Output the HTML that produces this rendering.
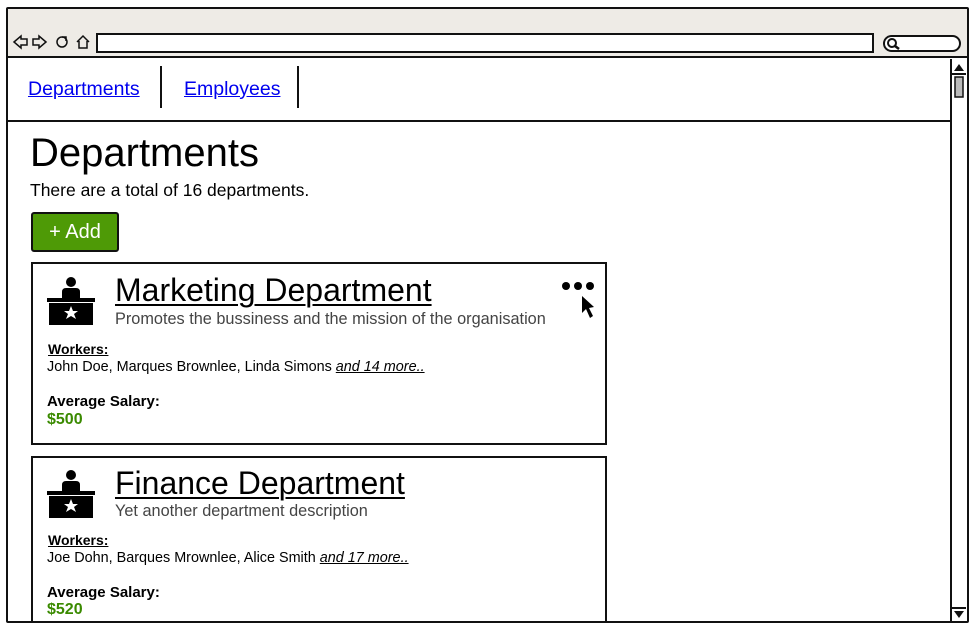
<!DOCTYPE html>
<html><head><meta charset="utf-8"><style>
*{margin:0;padding:0;box-sizing:border-box}
html,body{width:975px;height:629px;overflow:hidden}
body{background:#fff;position:relative;font-family:"Liberation Sans",sans-serif;color:#000}
.a{position:absolute;white-space:nowrap}
.frame{left:6px;top:7px;width:963px;height:616px;border:2px solid #111;border-radius:2px;z-index:5}
.tb{left:8px;top:9px;width:959px;height:49px;background:#eeebe6;border-bottom:2px solid #111}
.addr{left:96px;top:33px;width:778px;height:20px;background:#fff;border:2px solid #111}
.search{left:883px;top:35px;width:78px;height:17px;background:#fff;border:2px solid #111;border-radius:9px}
.sb{left:950px;top:59px;width:16px;height:563px;border-left:2px solid #111;background:#fff}
.nav{left:8px;top:120px;width:943px;height:2px;background:#111}
.lnk{color:#00e;text-decoration:underline;font-size:19.5px}
.sep{width:2px;height:42px;background:#111;top:66px}
.card{left:31px;width:576px;border:2px solid #111;background:#fff}
.t{font-size:32px;text-decoration:underline;text-decoration-thickness:2px;text-underline-offset:3px}
.d{font-size:16.3px;color:#444}
.w{font-size:14px;font-weight:bold;text-decoration:underline}
.n{font-size:14.4px}
.n i{text-decoration:underline}
.s{font-size:16px;font-weight:bold;color:#3a8a00}
</style></head><body>
<div class="a tb"></div>
<svg class="a" style="left:12px;top:33px" width="80" height="18" viewBox="0 0 80 18" fill="none" stroke="#111" stroke-width="1.5">
<path d="M2 9 L9 3 V6 H15 V12 H9 V15 Z"/>
<path d="M46 9 L39 3 V6 H33 V12 H39 V15 Z" transform="translate(-12 0)"/>
<circle cx="50" cy="9" r="5"/><path d="M50 4 L54 4 L54 8"/>
<path d="M71 9 L77 3 L83 9 M73 8 V15 H81 V8" transform="translate(-6 0)"/>
</svg>
<div class="a addr"></div>
<div class="a search"></div>
<svg class="a" style="left:886px;top:37px" width="14" height="13"><circle cx="6" cy="6" r="4" fill="none" stroke="#111" stroke-width="2"/><path d="M9 9 L13 12" stroke="#111" stroke-width="2.5"/></svg>
<div class="a sb"></div>
<svg class="a" style="left:952px;top:60px" width="14" height="563">
<path d="M2 11 L7 4 L12 11 Z" fill="#111"/><line x1="0" y1="14" x2="14" y2="14" stroke="#111" stroke-width="2"/>
<rect x="3" y="17" width="8" height="20" fill="#bbb" stroke="#111" stroke-width="1.5"/>
<line x1="0" y1="548" x2="14" y2="548" stroke="#111" stroke-width="2"/><path d="M2 551 L7 558 L12 551 Z" fill="#111"/>
</svg>
<div class="a nav"></div>
<div class="a lnk" style="left:28px;top:78px">Departments</div>
<div class="a sep" style="left:160px"></div>
<div class="a lnk" style="left:184px;top:78px">Employees</div>
<div class="a sep" style="left:297px"></div>
<div class="a" style="left:30px;top:131px;font-size:40px">Departments</div>
<div class="a" style="left:30px;top:180px;font-size:17.5px">There are a total of 16 departments.</div>
<div class="a" style="left:31px;top:212px;width:88px;height:40px;background:#4e9a06;border:2px solid #111;border-radius:3px;color:#fff;font-size:20px;text-align:center;line-height:36px">+ Add</div>

<div class="a card" style="top:262px;height:183px"></div>
<svg class="a" style="left:47px;top:276px" width="48" height="50"><circle cx="24" cy="6" r="5" fill="#000"/><path d="M15 24 V16 Q15 12 19 12 H29 Q33 12 33 16 V24 Z" fill="#000"/><rect x="0" y="22" width="48" height="4" fill="#000"/><rect x="2" y="27" width="44" height="22" fill="#000"/><path d="M24 30 L26 35 L31 35 L27 38 L29 43 L24 40 L19 43 L21 38 L17 35 L22 35 Z" fill="#fff"/></svg>
<div class="a t" style="left:115px;top:272px">Marketing Department</div>
<div class="a d" style="left:115px;top:310px">Promotes the bussiness and the mission of the organisation</div>
<svg class="a" style="left:561px;top:280px" width="36" height="42"><circle cx="5" cy="6" r="4"/><circle cx="17" cy="6" r="4"/><circle cx="29" cy="6" r="4"/><path d="M21 16 L21 33 L25 29 L29 38 L32 36 L28 28 L33 27 Z" fill="#000"/></svg>
<div class="a w" style="left:48px;top:341px">Workers:</div>
<div class="a n" style="left:47px;top:359px">John Doe, Marques Brownlee, Linda Simons <i>and 14 more..</i></div>
<div class="a w" style="left:47px;top:393px;text-decoration:none;font-size:15px">Average Salary:</div>
<div class="a s" style="left:47px;top:411px">$500</div>

<div class="a card" style="top:456px;height:170px"></div>
<svg class="a" style="left:47px;top:469px" width="48" height="50"><circle cx="24" cy="6" r="5" fill="#000"/><path d="M15 24 V16 Q15 12 19 12 H29 Q33 12 33 16 V24 Z" fill="#000"/><rect x="0" y="22" width="48" height="4" fill="#000"/><rect x="2" y="27" width="44" height="22" fill="#000"/><path d="M24 30 L26 35 L31 35 L27 38 L29 43 L24 40 L19 43 L21 38 L17 35 L22 35 Z" fill="#fff"/></svg>
<div class="a t" style="left:115px;top:465px">Finance Department</div>
<div class="a d" style="left:115px;top:502px">Yet another department description</div>
<div class="a w" style="left:48px;top:532px">Workers:</div>
<div class="a n" style="left:47px;top:550px">Joe Dohn, Barques Mrownlee, Alice Smith <i>and 17 more..</i></div>
<div class="a w" style="left:47px;top:584px;text-decoration:none;font-size:15px">Average Salary:</div>
<div class="a s" style="left:47px;top:601px">$520</div>
<div class="a" style="left:0;top:622px;width:975px;height:20px;background:#fff;z-index:4"></div>
<div class="a frame"></div>
</body></html>
